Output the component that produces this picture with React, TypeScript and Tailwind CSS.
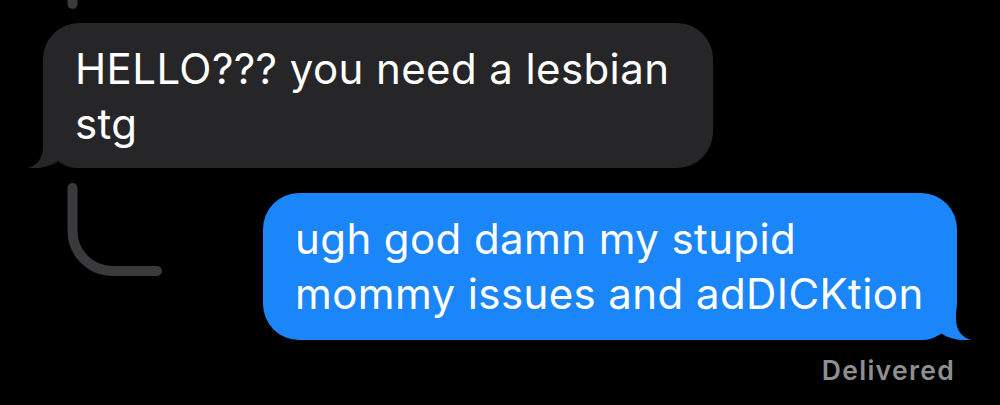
import React from 'react';

const Tail: React.FC<{ color: string; side: 'left' | 'right' }> = ({ color, side }) => (
  <svg
    width="70"
    height="35"
    viewBox="0 0 70 35"
    className={
      side === 'left'
        ? 'absolute left-[-15px] bottom-0'
        : 'absolute right-[-14px] bottom-0 -scale-x-100'
    }
  >
    <path
      d="M15 0 V13 C15 26 9 32 0 35 C9 36 24 34 31 27 C35 32 40 35 50 35 H70 V0 Z"
      fill={color}
    />
  </svg>
);

export default function App() {
  return (
    <div className="w-[1000px] h-[405px] bg-black overflow-hidden font-['Inter','Liberation_Sans',sans-serif]">
      {/* thread line from the message above */}
      <svg width="11" height="9" className="block ml-[67px]">
        <line x1="5.5" y1="-6" x2="5.5" y2="4" stroke="#3a3a3c" strokeWidth="10" strokeLinecap="round" />
      </svg>

      <div className="relative mt-[14px] ml-[43px] w-[670px] rounded-[36px] bg-[#262628] px-[32px] pt-[18px] pb-[17px] text-[42px] leading-[55px] tracking-[0.4px] text-white">
        <Tail color="#262628" side="left" />
        <span className="relative">
          HELLO??? you need a lesbian
          <br />
          stg
        </span>
      </div>

      <div className="flex items-start">
        <svg width="100" height="100" className="block ml-[62px] mt-[10px] shrink-0">
          <path
            d="M10.5 10 V53 A40 40 0 0 0 50.5 93 H95"
            fill="none"
            stroke="#3a3a3c"
            strokeWidth="10"
            strokeLinecap="round"
          />
        </svg>
        <div className="relative ml-auto mr-[43px] mt-[25px] w-[694px] rounded-[36px] bg-[#1b86fa] px-[32px] pt-[18px] pb-[19px] text-[42px] leading-[55px] tracking-[0.4px] text-white">
          <Tail color="#1b86fa" side="right" />
          <span className="relative">
            ugh god damn my stupid
            <br />
            mommy issues and adDICKtion
          </span>
        </div>
      </div>

      <div className="mt-[15px] pr-[45px] text-right text-[26.5px] leading-[30px] tracking-[1.3px] font-semibold text-[#8e8e93]">
        Delivered
      </div>
    </div>
  );
}
